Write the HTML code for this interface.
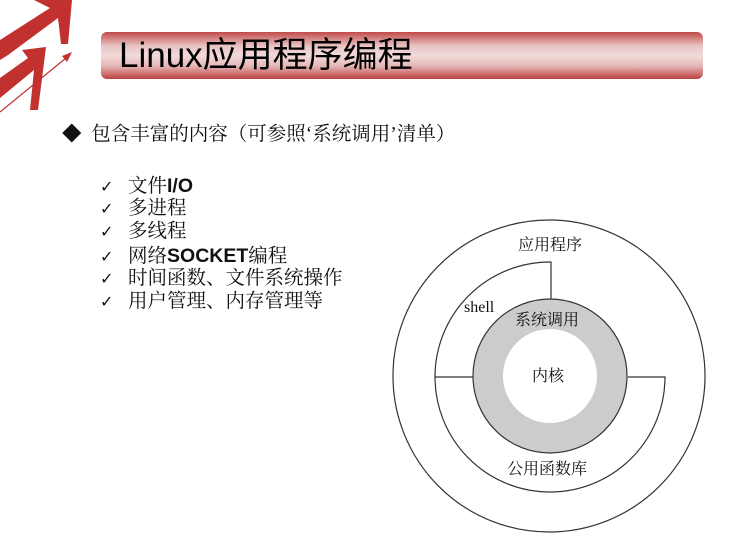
<!DOCTYPE html>
<html><head><meta charset="utf-8"><style>
body{margin:0;width:743px;height:554px;background:#fff;position:relative;overflow:hidden;font-family:"Liberation Serif","Noto Serif CJK SC",serif;color:#111}
.bar{position:absolute;left:101px;top:32px;width:602px;height:47px;border-radius:6px;background:linear-gradient(to bottom,#c24a4a 0%,#e9c4c4 30%,#f2dada 50%,#e6b8b8 72%,#bd3f3f 100%)}
.title{position:absolute;left:119px;top:34px;font-family:"Liberation Sans","Noto Sans CJK SC",sans-serif;font-size:35px;color:#000;line-height:44px}
.t{position:absolute;font-size:19.5px;line-height:22px;white-space:nowrap}
.b{font-family:"Liberation Sans",sans-serif;font-weight:bold}
.c{font-family:"DejaVu Sans",sans-serif;font-size:16px;display:inline-block;width:28px}
</style></head><body>
<svg width="743" height="554" style="position:absolute;left:0;top:0">
<g fill="#c0312f">
<polygon points="0,40 50,8 34,0 72,0 68,44 61,44 58,18 8,55 0,60"/>
<polygon points="0,78 28,58 22,50 46,47 38,110 30,110 34,70 0,98"/>
</g>
<line x1="0" y1="112" x2="66" y2="58" stroke="#c0312f" stroke-width="1.2"/>
<polygon points="72,52 62,56 67,62" fill="#c0312f"/>
<g fill="none" stroke="#333" stroke-width="1.2">
<circle cx="549" cy="376" r="156"/>
<path d="M551,299 L551,262 A115,115 0 0 0 435,377 L473,377"/>
<path d="M435,377 A115,115 0 0 0 665,377 L628,377"/>
</g>
<circle cx="550" cy="376" r="62" fill="none" stroke="#ccc" stroke-width="30"/>
<circle cx="550" cy="376" r="77" fill="none" stroke="#333" stroke-width="1.2"/>
</svg>
<div class="bar"></div>
<div class="title">Linux应用程序编程</div>
<div class="t" style="left:62px;top:124px">◆&nbsp; 包含丰富的内容（可参照‘系统调用’清单）</div>
<div class="t" style="left:100px;top:175px"><span class="c">✓</span>文件<span class="b">I/O</span></div>
<div class="t" style="left:100px;top:198px"><span class="c">✓</span>多进程</div>
<div class="t" style="left:100px;top:221px"><span class="c">✓</span>多线程</div>
<div class="t" style="left:100px;top:245px"><span class="c">✓</span>网络<span class="b">SOCKET</span>编程</div>
<div class="t" style="left:100px;top:268px"><span class="c">✓</span>时间函数、文件系统操作</div>
<div class="t" style="left:100px;top:291px"><span class="c">✓</span>用户管理、内存管理等</div>
<div class="t" style="left:518px;top:235px;font-size:16px">应用程序</div>
<div class="t" style="left:464px;top:297px;font-size:16px">shell</div>
<div class="t" style="left:515px;top:310px;font-size:16px">系统调用</div>
<div class="t" style="left:532px;top:366px;font-size:16px">内核</div>
<div class="t" style="left:507px;top:459px;font-size:16px">公用函数库</div>
</body></html>
